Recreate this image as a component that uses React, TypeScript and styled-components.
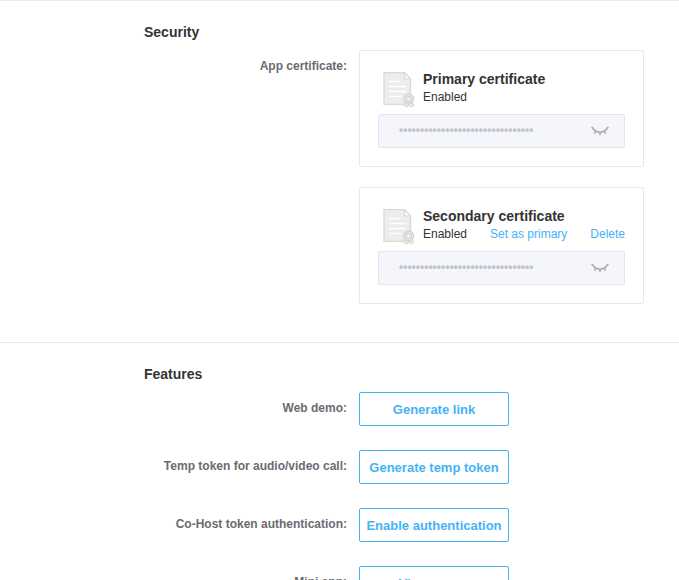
import React, { useId } from 'react';
import styled, { createGlobalStyle } from 'styled-components';

const GlobalStyle = createGlobalStyle`
  *, *::before, *::after { box-sizing: border-box; }
  html, body { margin: 0; height: 100%; background: #fff; }
  body {
    overflow: hidden;
    color: #333;
    font-family: "Liberation Sans", Arial, sans-serif;
    font-size: 12px;
    line-height: 18px;
  }
`;

const Section = styled.section`
  border-top: 1px solid #ebebeb;
  padding: 21px 35px 38px 144px;
`;

const Heading = styled.h2`
  margin: 0 0 8px;
  font-size: 14px;
  line-height: 20px;
  font-weight: 700;
`;

const Rows = styled.div`
  display: grid;
  gap: 24px;
`;

const Row = styled.div`
  display: grid;
  grid-template-columns: 203px minmax(0, 1fr);
  column-gap: 12px;
  align-items: start;
`;

const Label = styled.label`
  padding-top: 7px;
  text-align: right;
  white-space: nowrap;
  color: #6b6b6f;
  font-weight: 700;
`;

const Cards = styled.div`
  display: grid;
  gap: 20px;
`;

const Card = styled.article`
  border: 1px solid #e8e8e8;
  border-radius: 2px;
  padding: 18px;
`;

const CardHeader = styled.header`
  display: flex;
  gap: 8px;
  height: 45px;
  padding-left: 5px;
`;

const CardInfo = styled.div`
  flex: 1;
`;

const CardTitle = styled.h3`
  margin: 0;
  font-size: 14px;
  line-height: 20px;
  font-weight: 700;
`;

const StatusLine = styled.div`
  display: flex;
  justify-content: space-between;
  line-height: 16px;
  white-space: nowrap;
`;

const TextLink = styled.a`
  color: #44b3f5;
  text-decoration: none;
`;

const SecretField = styled.div`
  display: flex;
  align-items: center;
  height: 34px;
  padding: 0 15px 0 20px;
  border: 1px solid #e1e5ec;
  border-radius: 2px;
  background: #f5f6fb;
`;

const SecretInput = styled.input`
  flex: 1;
  min-width: 0;
  padding: 0 0 2px;
  border: 0;
  outline: 0;
  background: transparent;
  color: #c3c5cd;
  font: 700 12px/18px "Liberation Sans", Arial, sans-serif;
`;

const IconButton = styled.button`
  display: flex;
  padding: 0;
  border: 0;
  background: transparent;
  cursor: pointer;
`;

const ActionButton = styled.button`
  width: 150px;
  height: 34px;
  padding: 2px 0 0;
  border: 1px solid #44b3f5;
  border-radius: 2px;
  background: #fff;
  color: #44b3f5;
  font: 700 13px/18px "Liberation Sans", Arial, sans-serif;
  white-space: nowrap;
  cursor: pointer;
`;

function CertificateIcon() {
  return (
    <svg width="32" height="40" viewBox="0 0 32 40" aria-hidden="true">
      <path d="M1 3.7H21.5L27.5 10V35.3H1Z" fill="#ededed" stroke="#d9d9d9" strokeWidth="1.3" />
      <path d="M21.5 3.7V10H27.5Z" fill="#fafafa" stroke="#d9d9d9" strokeWidth="1.2" strokeLinejoin="round" />
      <path d="M6.5 12.5H16.5M6.5 17.5H22.5M6.5 22.5H22.5M6.5 27.5H18" stroke="#fff" strokeWidth="1.5" strokeLinecap="round" />
      <path d="M22.5 33L21 37L23.2 36.8L24.4 38.2L25.8 34.5L27.4 38.2L28.8 36.8L31 37L29 33Z" fill="#f0f0f0" stroke="#d2d2d2" strokeLinejoin="round" />
      <circle cx="25.8" cy="30" r="4.8" fill="#eee" stroke="#d2d2d2" strokeWidth="1.4" />
      <circle cx="25.8" cy="30" r="2.6" fill="#f1f1f1" stroke="#d2d2d2" strokeWidth="1.2" />
    </svg>
  );
}

function ClosedEyeIcon() {
  return (
    <svg width="18" height="12" viewBox="0 0 18 12" aria-hidden="true" fill="none" stroke="#b0b0b0">
      <path d="M1.2 2.5C3.5 5.8 6 7.2 9 7.2S14.5 5.8 16.8 2.5" strokeWidth="1.9" strokeLinecap="round" />
      <path d="M4.5 5.8L3.7 8.8M9 7V10.2M13.5 5.8L14.3 8.8" strokeWidth="1.7" />
    </svg>
  );
}

type CertificateProps = { id: string; title: string; secondary?: boolean };

function Certificate({ id, title, secondary }: CertificateProps) {
  return (
    <Card>
      <CardHeader>
        <CertificateIcon />
        <CardInfo>
          <CardTitle>{title}</CardTitle>
          <StatusLine>
            <span>Enabled</span>
            {secondary && (
              <>
                <TextLink href="#primary">Set as primary</TextLink>
                <TextLink href="#delete">Delete</TextLink>
              </>
            )}
          </StatusLine>
        </CardInfo>
      </CardHeader>
      <SecretField>
        <SecretInput
          id={id}
          type="password"
          aria-label={title}
          value="00000000000000000000000000000000"
          readOnly
        />
        <IconButton type="button" aria-label="Show certificate">
          <ClosedEyeIcon />
        </IconButton>
      </SecretField>
    </Card>
  );
}

function Feature({ label, action }: { label: string; action: string }) {
  const id = useId();
  return (
    <Row>
      <Label htmlFor={id}>{label}</Label>
      <ActionButton id={id} type="button">{action}</ActionButton>
    </Row>
  );
}

export default function App() {
  return (
    <>
      <GlobalStyle />
      <main>
        <Section>
          <Heading>Security</Heading>
          <Row>
            <Label htmlFor="primary-certificate">App certificate:</Label>
            <Cards>
              <Certificate id="primary-certificate" title="Primary certificate" />
              <Certificate id="secondary-certificate" title="Secondary certificate" secondary />
            </Cards>
          </Row>
        </Section>
        <Section>
          <Heading>Features</Heading>
          <Rows>
            <Feature label="Web demo:" action="Generate link" />
            <Feature label="Temp token for audio/video call:" action="Generate temp token" />
            <Feature label="Co-Host token authentication:" action="Enable authentication" />
            <Feature label="Mini app:" action="View usage" />
          </Rows>
        </Section>
      </main>
    </>
  );
}
